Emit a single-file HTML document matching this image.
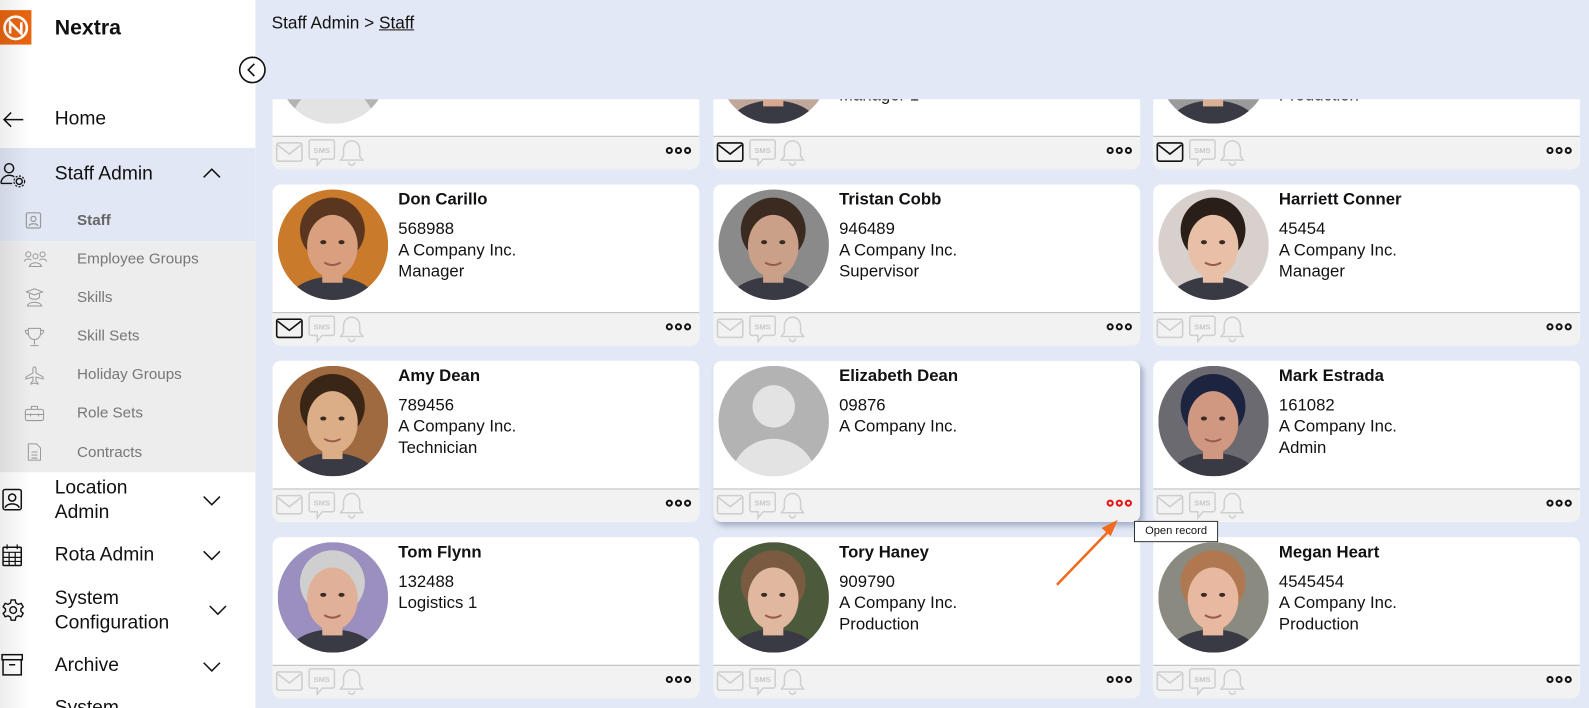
<!DOCTYPE html>
<html><head><meta charset="utf-8">
<style>
*{box-sizing:border-box;margin:0;padding:0}
html,body{width:1589px;height:708px;overflow:hidden;background:#e2e8f5}
body{font-family:"Liberation Sans",Arial,sans-serif;position:relative;color:#111}
#wrap{position:absolute;left:0;top:0;width:1568px;height:699px;transform:scale(1.0134);transform-origin:0 0}
#side{position:absolute;left:0;top:0;width:252px;height:708px;background:#fff;z-index:5;overflow:hidden}
#side .shade{position:absolute;left:0;top:0;width:30px;height:708px;background:linear-gradient(90deg,rgba(0,0,0,0.07),rgba(0,0,0,0));z-index:3;pointer-events:none}
.mi{position:absolute;left:54px;font-size:19px;color:#111;line-height:24px}
.si{position:absolute;left:76px;font-size:15px;color:#777}
.ico{position:absolute}
.chev{position:absolute;left:200px}
#head{position:absolute;left:252px;top:0;width:1337px;height:98px;background:#e2e8f5;z-index:4}
.card{position:absolute;width:421px;height:159px;background:#fff;border-radius:8px;overflow:hidden}
.card .ft{position:absolute;left:0;bottom:0;width:100%;height:33px;background:#f2f2f2;border-top:1px solid #bdbdbd}
.av{position:absolute;left:5px;top:5px;width:109px;height:109px;border-radius:50%;overflow:hidden}
.nm{position:absolute;left:124px;top:6px;font-weight:bold;font-size:16.5px}
.tx{position:absolute;left:124px;top:34px;font-size:16.5px;line-height:21px}
.dots{position:absolute;right:8px;top:10px;display:flex;gap:2px}
.dots i{display:block;width:7px;height:7px;border:2px solid #111;border-radius:50%}
.fi{position:absolute;top:3px}
</style></head><body>
<div id="wrap">
<div id="side">
<div class="shade"></div>
<div style="position:absolute;left:0;top:10px;width:31px;height:34px;background:#e8650f"></div>
<svg class="ico" style="left:2px;top:14px" width="27" height="27" viewBox="0 0 27 27"><circle cx="13.5" cy="13.5" r="11" fill="none" stroke="#fff" stroke-width="2.6"/><path d="M8 19V8l11 11V8" fill="none" stroke="#fff" stroke-width="2.6"/></svg>
<div style="position:absolute;left:54px;top:16px;font-size:21px;font-weight:bold">Nextra</div>

<svg class="ico" style="left:2px;top:108px" width="22" height="20"><path d="M21 10H2M9 3L2 10l7 7" fill="none" stroke="#111" stroke-width="1.5"/></svg>
<div class="mi" style="top:106px">Home</div>

<div style="position:absolute;left:0;top:146px;width:252px;height:92px;background:#e1e7f5"></div>
<svg class="ico" style="left:0;top:160px" width="28" height="26"><circle cx="9" cy="6" r="4.5" fill="none" stroke="#111" stroke-width="1.4"/><path d="M1 21c0-5 4-8 8-8 2 0 4 .5 5 1.5M1 21h11" fill="none" stroke="#111" stroke-width="1.4"/><circle cx="19" cy="19" r="3" fill="none" stroke="#111" stroke-width="1.4"/><circle cx="19" cy="19" r="5.3" fill="none" stroke="#111" stroke-width="1.2" stroke-dasharray="2 1.5"/></svg>
<div class="mi" style="top:160px">Staff Admin</div>
<svg class="chev" style="top:165px" width="18" height="12"><path d="M1 10l8-8 8 8" fill="none" stroke="#111" stroke-width="1.5"/></svg>

<svg class="ico" style="left:25px;top:209px" width="16" height="17"><rect x="1" y="1" width="14" height="15" rx="1.5" fill="none" stroke="#999" stroke-width="1.2"/><circle cx="8" cy="7" r="2.5" fill="none" stroke="#999" stroke-width="1.2"/><path d="M3.5 14c1-3 8-3 9 0" fill="none" stroke="#999" stroke-width="1.2"/></svg>
<div class="si" style="top:209px;font-weight:bold;color:#666">Staff</div>

<div style="position:absolute;left:0;top:238px;width:252px;height:228px;background:#ededed"></div>
<svg class="ico" style="left:23px;top:247px" width="24" height="18"><circle cx="5" cy="4" r="2.5" fill="none" stroke="#999"/><circle cx="12" cy="6" r="2.5" fill="none" stroke="#999"/><circle cx="19" cy="4" r="2.5" fill="none" stroke="#999"/><path d="M1 11c1-3 6-3 7-1M16 10c1-2 6-2 7 1M6 16c1-5 11-5 12 0z" fill="none" stroke="#999"/></svg>
<div class="si" style="top:247px">Employee Groups</div>
<svg class="ico" style="left:25px;top:284px" width="18" height="20"><path d="M1 4l8-3 8 3-8 3z M4 6v3c0 3 10 3 10 0V6M2 18c1-5 13-5 14 0z" fill="none" stroke="#999"/></svg>
<div class="si" style="top:285px">Skills</div>
<svg class="ico" style="left:24px;top:322px" width="20" height="20"><path d="M4 2h12v5a6 6 0 0 1-12 0zM4 4H1c0 3 2 4 3 4M16 4h3c0 3-2 4-3 4M10 13v5M6 19h8" fill="none" stroke="#999"/></svg>
<div class="si" style="top:323px">Skill Sets</div>
<svg class="ico" style="left:24px;top:361px" width="20" height="20"><path d="M10 1c1 0 1.5 1 1.5 2v4l7 4v2l-7-2v4l2 2v1l-3.5-1-3.5 1v-1l2-2v-4l-7 2v-2l7-4V3c0-1 .5-2 1.5-2z" fill="none" stroke="#999"/></svg>
<div class="si" style="top:361px">Holiday Groups</div>
<svg class="ico" style="left:24px;top:399px" width="20" height="18"><rect x="1" y="5" width="18" height="11" rx="2" fill="none" stroke="#999"/><path d="M7 5V2h6v3M1 10h18M6 9v3M14 9v3" fill="none" stroke="#999"/></svg>
<div class="si" style="top:399px">Role Sets</div>
<svg class="ico" style="left:27px;top:437px" width="14" height="18"><path d="M1 1h8l4 4v12H1zM4 9h6M4 12h6M4 15h6" fill="none" stroke="#999"/></svg>
<div class="si" style="top:438px">Contracts</div>

<svg class="ico" style="left:2px;top:482px" width="20" height="22"><rect x="1" y="1" width="18" height="20" rx="2" fill="none" stroke="#111" stroke-width="1.5"/><circle cx="10" cy="9" r="3.5" fill="none" stroke="#111" stroke-width="1.5"/><path d="M3 19c2-5 12-5 14 0" fill="none" stroke="#111" stroke-width="1.5"/></svg>
<div class="mi" style="top:470px">Location<br>Admin</div>
<svg class="chev" style="top:488px" width="18" height="12"><path d="M1 2l8 8 8-8" fill="none" stroke="#111" stroke-width="1.5"/></svg>

<svg class="ico" style="left:2px;top:537px" width="20" height="22"><rect x="1" y="3" width="18" height="18" rx="1" fill="none" stroke="#111" stroke-width="1.5"/><path d="M5 0v5M15 0v5M1 8h18M1 13h18M1 17h18M7 8v13M13 8v13" fill="none" stroke="#111" stroke-width="1.2"/></svg>
<div class="mi" style="top:536px">Rota Admin</div>
<svg class="chev" style="top:542px" width="18" height="12"><path d="M1 2l8 8 8-8" fill="none" stroke="#111" stroke-width="1.5"/></svg>

<svg class="ico" style="left:1px;top:590px" width="24" height="24" viewBox="0 0 24 24"><path d="M10 2h4l.6 3 2.4 1.4 2.9-1 2 3.4-2.3 2v2.4l2.3 2-2 3.4-2.9-1-2.4 1.4-.6 3h-4l-.6-3L7 17.6l-2.9 1-2-3.4 2.3-2v-2.4l-2.3-2 2-3.4 2.9 1L9.4 5z" fill="none" stroke="#111" stroke-width="1.4"/><circle cx="12" cy="12" r="3.3" fill="none" stroke="#111" stroke-width="1.4"/></svg>
<div class="mi" style="top:579px">System<br>Configuration</div>
<svg class="chev" style="left:206px;top:596px" width="18" height="12"><path d="M1 2l8 8 8-8" fill="none" stroke="#111" stroke-width="1.5"/></svg>

<svg class="ico" style="left:1px;top:645px" width="22" height="22"><rect x="1" y="1" width="20" height="5" fill="none" stroke="#111" stroke-width="1.5"/><path d="M2 6v15h18V6M8 11h6" fill="none" stroke="#111" stroke-width="1.5"/></svg>
<div class="mi" style="top:645px">Archive</div>
<svg class="chev" style="top:652px" width="18" height="12"><path d="M1 2l8 8 8-8" fill="none" stroke="#111" stroke-width="1.5"/></svg>
<div class="mi" style="top:687px">System</div>
</div>

<svg style="position:absolute;left:235px;top:55px;z-index:6" width="28" height="28"><circle cx="14" cy="14" r="12.5" fill="#fff" stroke="#111" stroke-width="1.6"/><path d="M16 8l-6 6 6 6" fill="none" stroke="#111" stroke-width="1.6"/></svg>

<div id="head"><div style="position:absolute;left:16px;top:13px;font-size:17px">Staff Admin &gt; <span style="text-decoration:underline">Staff</span></div></div>

<div id="cards"></div>

<div style="position:absolute;left:1119px;top:514px;width:83px;height:21px;background:#fff;border:1px solid #333;font-size:11px;line-height:19px;text-align:center;z-index:7">Open record</div>
<svg style="position:absolute;left:1035px;top:505px;z-index:7" width="75" height="80"><path d="M8 72L62 16" stroke="#f26a1b" stroke-width="2.5"/><path d="M68 8L52 16l9 8z" fill="#f26a1b"/></svg>
</div>
<script>
var cols=[269,704,1138],tops=[8,182,356,530];
var data=[
["","",[],"#c8c8c8","ph",0],
["","",["","","Manager 1"],"#bfa89a","#d8a890",1],
["","",["","","Production"],"#9a9a9a","#d9b094",1],
["Don Carillo","",["568988","A Company Inc.","Manager"],"#c97a2a","#d9a080",1,"#5a3520"],
["Tristan Cobb","",["946489","A Company Inc.","Supervisor"],"#8a8a8a","#caa088",0,"#3a2a20"],
["Harriett Conner","",["45454","A Company Inc.","Manager"],"#d8d0cc","#e8c0a8",0,"#2a1e18"],
["Amy Dean","",["789456","A Company Inc.","Technician"],"#a06a40","#dcae88",0,"#3a2616"],
["Elizabeth Dean","",["09876","A Company Inc."],"","ph",0],
["Mark Estrada","",["161082","A Company Inc.","Admin"],"#6a6a70","#d09880",0,"#1c2440"],
["Tom Flynn","",["132488","Logistics 1"],"#9b8fc0","#e0b098",0,"#cfcfcf"],
["Tory Haney","",["909790","A Company Inc.","Production"],"#4a5a3a","#e0b8a0",0,"#7a5a40"],
["Megan Heart","",["4545454","A Company Inc.","Production"],"#8a8a80","#e8b8a0",0,"#b07850"]
];
var h="";
data.forEach(function(d,i){
 var r=Math.floor(i/3),c=i%3,x=cols[c],y=tops[r];
 var sh=(i==7)?"box-shadow:3px 4px 5px rgba(90,110,150,.45);":"";
 h+='<div class="card" style="left:'+x+'px;top:'+y+'px;'+sh+'">';
 var av;
 if(d[4]=="ph"){av='<svg width="109" height="109"><rect width="109" height="109" fill="#b3b3b3"/><circle cx="54.5" cy="40" r="21" fill="#e3e3e3"/><ellipse cx="54.5" cy="112" rx="42" ry="40" fill="#e3e3e3"/></svg>';}
 else{av='<svg width="109" height="109"><rect width="109" height="109" fill="'+d[3]+'"/><ellipse cx="54" cy="40" rx="32" ry="32" fill="'+(d[6]||"#5a3a28")+'"/><ellipse cx="54" cy="112" rx="44" ry="26" fill="#3a3a44"/><rect x="44" y="70" width="20" height="22" fill="'+d[4]+'"/><ellipse cx="54" cy="56" rx="25" ry="31" fill="'+d[4]+'"/><ellipse cx="45" cy="52" rx="3" ry="2" fill="#3a2a22"/><ellipse cx="63" cy="52" rx="3" ry="2" fill="#3a2a22"/><path d="M46 72q8 5 16 0" stroke="#9a5a50" stroke-width="2" fill="none"/></svg>';}
 h+='<div class="av">'+av+'</div>';
 if(d[0])h+='<div class="nm">'+d[0]+'</div>';
 h+='<div class="tx">'+d[2].join("<br>")+'</div>';
 var ec=d[5]?"#111":"#cfcfcf";
 h+='<div class="ft">'+
 '<svg class="fi" style="left:3px;top:5px" width="27" height="22"><rect x="1" y="1" width="25" height="18" rx="2" fill="none" stroke="'+ec+'" stroke-width="1.6"/><path d="M2 3l11.5 9L25 3" fill="none" stroke="'+ec+'" stroke-width="1.6"/></svg>'+
 '<svg class="fi" style="left:35px;top:2px" width="27" height="28"><path d="M3 1h21a2 2 0 0 1 2 2v15a2 2 0 0 1-2 2H14l-5 6v-6H3a2 2 0 0 1-2-2V3a2 2 0 0 1 2-2z" fill="none" stroke="#cfcfcf" stroke-width="1.5"/><text x="13.5" y="14" font-size="7.5" font-weight="bold" fill="#c8c8c8" text-anchor="middle" font-family="Liberation Sans">SMS</text></svg>'+
 '<svg class="fi" style="left:66px;top:2px" width="24" height="28"><path d="M12 2c-5 0-8 4-8 9v6l-3 4h22l-3-4v-6c0-5-3-9-8-9zM9 23a3 3 0 0 0 6 0" fill="none" stroke="#cfcfcf" stroke-width="1.5"/></svg>'+
 '<div class="dots">'+(i==7?'<i style="border-color:#e81010"></i><i style="border-color:#e81010"></i><i style="border-color:#e81010"></i>':'<i></i><i></i><i></i>')+'</div></div>';
 h+='</div>';
});
document.getElementById("cards").innerHTML=h;
</script>
</body></html>
